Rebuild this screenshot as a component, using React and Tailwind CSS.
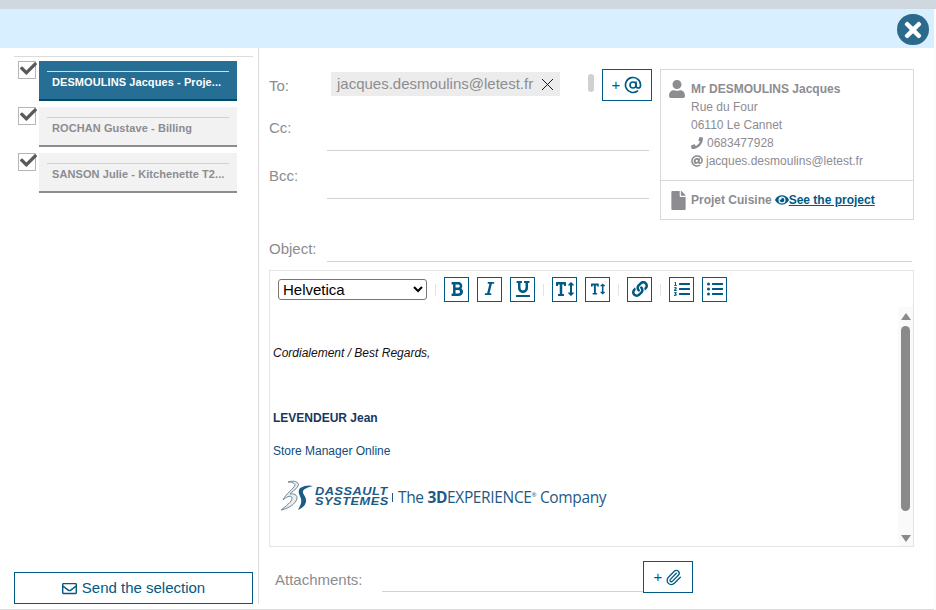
import React from "react";
import { AtSign, Paperclip, X } from "lucide-react";
import {
  FaAt,
  FaBold,
  FaCheck,
  FaEye,
  FaFile,
  FaItalic,
  FaLink,
  FaListOl,
  FaListUl,
  FaPhone,
  FaRegEnvelope,
  FaTextHeight,
  FaTimes,
  FaUnderline,
  FaUser,
} from "react-icons/fa";

const contacts = [
  { label: "DESMOULINS Jacques - Proje...", active: true },
  { label: "ROCHAN Gustave - Billing" },
  { label: "SANSON Julie - Kitchenette T2..." },
];

function ContactRow({ label, active }) {
  return (
    <div className="flex h-[40px] mb-[6px]">
      <div className="relative w-[18px] h-[18px] border border-[#b5b5b5] bg-white mr-[3px]">
        <FaCheck className="absolute left-[1px] -top-[2px] text-[#5a5a5a]" size={17} />
      </div>
      <div
        className={`w-[198px] h-[40px] px-[8px] pt-[10px] border-b-2 ${
          active ? "bg-[#266e94] border-[#014968] text-white" : "bg-[#f2f2f2] border-[#8c8c91] text-[#8c8c91]"
        }`}
      >
        <div className={`border-t pl-[5px] text-[11px] font-bold tracking-[0.08px] leading-[20px] whitespace-nowrap ${active ? "border-[#d5dde2]" : "border-[#d0d0d0]"}`}>
          {label}
        </div>
      </div>
    </div>
  );
}

function FieldLine({ label, className }) {
  return (
    <div className={`flex ${className}`}>
      <span className="w-[58px] text-[15px] text-[#8c8c91]">{label}</span>
      <div className="flex-1 border-b border-[#d2d2d2]" />
    </div>
  );
}

function ToolButton({ children }) {
  return (
    <button className="w-[25px] h-[25px] border border-[#005a85] text-[#005a85] flex items-center justify-center pb-[2px]">
      {children}
    </button>
  );
}

function Sep() {
  return <div className="w-px h-[12px] bg-[#e4e4e4] mx-[8px]" />;
}

function Logo() {
  return (
    <div className="flex items-center h-[32px] ml-[7px] mt-[23px] text-[#1d5a86]">
      <svg width="34" height="31" viewBox="0 0 34 31" fill="none" className="mr-[1px] -mt-[3px]">
        <path d="M8 2 C14 0 20 2 18 6 C16 10 11 12 10 14 C15 13 19 16 16 21 C13 26 6 29 1 30 C6 26 12 22 12 18 C12 15 7 16 3 20 C6 13 14 9 15 5 C15 3 11 2 8 2Z" stroke="#6f8797" strokeWidth="1" fill="#e9eef1" />
        <path d="M20 8 C25 5 30 5 33 6 C28 7 24 9 23 11 C22 14 27 17 26 22 C25 26 22 28 18 30 C20 26 22 23 21 19 C20 15 17 12 20 8Z" fill="#1d5a86" />
      </svg>
      <div className="font-['Liberation_Sans',sans-serif] font-bold italic text-[10px] leading-[10px] tracking-[0.4px] scale-x-[1.28] origin-left w-[77px] whitespace-nowrap">
        <div>DASSAULT</div>
        <div>SYSTEMES</div>
      </div>
      <div className="w-px h-[9px] bg-[#1d5a86] mr-[5px]" />
      <div className="font-['Open_Sans',sans-serif] text-[15.5px] tracking-[-0.35px] whitespace-nowrap">
        The <span className="font-bold">3D</span>EXPERIENCE<sup className="text-[6px] -top-[6px]">®</sup> Company
      </div>
    </div>
  );
}

export default function App() {
  return (
    <div className="w-[936px] h-[610px] overflow-hidden bg-[#fbfbfb] font-['Liberation_Sans',Arial,sans-serif]">
      <div className="h-[9px] bg-[#cfd8df]" />
      <div className="relative h-[39px] bg-[#d7efff] w-[934px]">
        <div className="absolute left-[897px] top-[5px] w-[32px] h-[31px] rounded-full bg-[#2b6a8c] flex items-center justify-center">
          <FaTimes className="text-white" size={24} />
        </div>
      </div>

      <div className="flex h-[562px] w-[934px] bg-white border-b border-[#dcdcdc]">
        {/* contact list */}
        <div className="w-[259px] shrink-0 h-[556px] pl-[14px] pr-[5px] pt-[8px] border-r border-[#dcdcdc] flex flex-col">
          <div className="border-t border-[#dcdcdc] pt-[4px] pl-[4px] flex-1">
            {contacts.map((c) => (
              <ContactRow key={c.label} {...c} />
            ))}
          </div>
          <button className="h-[32px] border border-[#005a85] text-[#005a85] text-[15px] flex items-center justify-center gap-[5px]">
            <FaRegEnvelope size={15} />
            Send the selection
          </button>
        </div>

        {/* mail form */}
        <div className="flex-1 pl-[10px] pt-[21px]">
          <div className="flex h-[151px]">
            <div className="w-[383px]">
              <div className="flex h-[32px] items-start">
                <span className="w-[62px] pt-[6px] text-[15px] text-[#8c8c91]">To:</span>
                <div className="mt-[3px] w-[229px] h-[24px] bg-[#ececec] flex items-center pl-[6px] text-[15px] text-[#8c8c91] whitespace-nowrap">
                  jacques.desmoulins@letest.fr
                  <X className="ml-[4px] text-[#111]" size={21} strokeWidth={1.1} />
                </div>
                <div className="mt-[5px] ml-[28px] w-[6px] h-[18px] rounded-[3px] bg-[#d0d0d0]" />
                <button className="ml-[8px] w-[50px] h-[32px] border border-[#005a85] text-[#005a85] flex items-center justify-center gap-[4px] text-[15px]">
                  + <AtSign size={18} strokeWidth={2.2} />
                </button>
              </div>
              <FieldLine label="Cc:" className="h-[50px] pt-[16px] w-[380px]" />
              <FieldLine label="Bcc:" className="h-[48px] pt-[14px] w-[380px]" />
            </div>
            <div className="ml-[8px] w-[254px] h-[151px] border border-[#d9d9d9] text-[12px] text-[#8c8c91]">
              <div className="relative h-[111px] pl-[30px] pt-[10px] border-b border-[#d9d9d9] leading-[18px]">
                <FaUser className="absolute left-[7px] top-[10px]" size={18} />
                <div className="font-bold">Mr DESMOULINS Jacques</div>
                <div>Rue du Four</div>
                <div>06110 Le Cannet</div>
                <div className="flex items-center gap-[4px]">
                  <FaPhone size={12} /> 0683477928
                </div>
                <div className="flex items-center gap-[3px]">
                  <FaAt size={12} /> jacques.desmoulins@letest.fr
                </div>
              </div>
              <div className="relative pl-[30px] pt-[10px] leading-[18px] flex items-center">
                <FaFile className="absolute left-[8px] top-[10px]" size={19} />
                <span className="font-bold">Projet Cuisine</span>
                <FaEye className="ml-[3px] text-[#005a85]" size={14} />
                <span className="font-bold text-[#005a85] underline">See the project</span>
              </div>
            </div>
          </div>

          <FieldLine label="Object:" className="h-[42px] pt-[18px] w-[643px]" />

          <div className="relative mt-[8px] w-[645px] h-[277px] border border-[#e4e4e4]">
            <div className="flex items-center pl-[8px] pt-[6px]">
              <select className="w-[149px] h-[21px] border border-[#767676] rounded-[3px] bg-white text-[15px] text-black">
                <option>Helvetica</option>
              </select>
              <Sep />
              <ToolButton><FaBold size={16} /></ToolButton>
              <div className="w-[8px]" />
              <ToolButton><FaItalic size={15} /></ToolButton>
              <div className="w-[8px]" />
              <ToolButton><FaUnderline size={16} /></ToolButton>
              <Sep />
              <ToolButton><FaTextHeight size={18} /></ToolButton>
              <div className="w-[8px]" />
              <ToolButton><FaTextHeight size={14} /></ToolButton>
              <Sep />
              <ToolButton><FaLink size={16} /></ToolButton>
              <Sep />
              <ToolButton><FaListOl size={16} /></ToolButton>
              <div className="w-[8px]" />
              <ToolButton><FaListUl size={16} /></ToolButton>
            </div>

            <div className="pl-[3px] pt-[44px] text-[12px] leading-[14px]">
              <div className="italic text-[#111]">Cordialement / Best Regards,</div>
              <div className="mt-[51px] font-bold text-[#17375e]">LEVENDEUR Jean</div>
              <div className="mt-[19px] text-[#124a78]">Store Manager Online</div>
              <Logo />
            </div>

            {/* editor scrollbar */}
            <div className="absolute right-0 top-[36px] bottom-0 w-[15px] bg-[#fafafa] flex flex-col items-center">
              <div className="mt-[6px] w-0 h-0 border-x-[5px] border-x-transparent border-b-[7px] border-b-[#8a8a8a]" />
              <div className="mt-[6px] w-[9px] h-[185px] rounded-[5px] bg-[#8a8a8a]" />
              <div className="mt-auto mb-[4px] w-0 h-0 border-x-[5px] border-x-transparent border-t-[7px] border-t-[#8a8a8a]" />
            </div>
          </div>

          <div className="flex mt-[14px] h-[31px] pl-[6px]">
            <span className="w-[107px] pt-[8px] text-[15px] text-[#8c8c91]">Attachments:</span>
            <div className="w-[261px] border-b border-[#d2d2d2]" />
            <button className="w-[50px] h-[32px] border border-[#005a85] text-[#005a85] flex items-center justify-center gap-[3px] text-[15px]">
              + <Paperclip size={17} strokeWidth={1.8} />
            </button>
          </div>
        </div>
      </div>
    </div>
  );
}
